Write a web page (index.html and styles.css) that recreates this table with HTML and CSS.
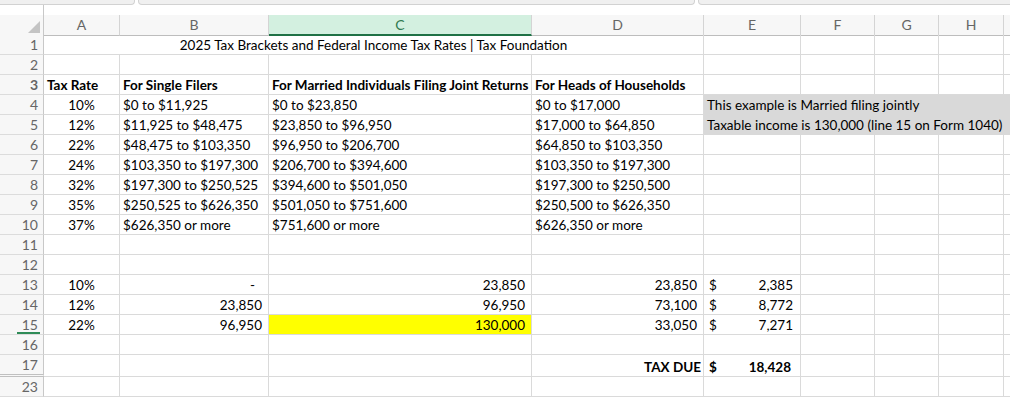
FILE: index.html
```html
<!DOCTYPE html>
<html>
<head>
<meta charset="utf-8">
<link rel="stylesheet" href="styles.css">
</head>
<body>
<div class="sheet">
  <div class="top">
    <div class="tab t1"></div>
    <div class="tab t2"></div>
    <div class="tab t3"></div>
  </div>
  <div class="gap"><div class="gap-corner"></div></div>

  <div class="row hdr">
    <div class="c corner"><span class="tri"></span></div>
    <div class="c">A</div><div class="c">B</div><div class="c sel">C</div><div class="c">D</div><div class="c">E</div><div class="c">F</div><div class="c">G</div><div class="c">H</div><div class="c"></div>
  </div>

  <div class="row">
    <div class="c rh">1</div>
    <div class="c title">2025 Tax Brackets and Federal Income Tax Rates | Tax Foundation</div>
    <div class="c"></div><div class="c"></div><div class="c"></div><div class="c"></div><div class="c"></div>
  </div>
  <div class="row">
    <div class="c rh">2</div>
    <div class="c"></div><div class="c"></div><div class="c"></div><div class="c"></div><div class="c"></div><div class="c"></div><div class="c"></div><div class="c"></div><div class="c"></div>
  </div>
  <div class="row bold">
    <div class="c rh">3</div>
    <div class="c">Tax Rate</div><div class="c">For Single Filers</div><div class="c">For Married Individuals Filing Joint Returns</div><div class="c">For Heads of Households</div><div class="c"></div><div class="c"></div><div class="c"></div><div class="c"></div><div class="c"></div>
  </div>
  <div class="row">
    <div class="c rh">4</div>
    <div class="c ctr">10%</div><div class="c">$0 to $11,925</div><div class="c">$0 to $23,850</div><div class="c">$0 to $17,000</div>
    <div class="c note">This example is Married filing jointly</div>
  </div>
  <div class="row">
    <div class="c rh">5</div>
    <div class="c ctr">12%</div><div class="c">$11,925 to $48,475</div><div class="c">$23,850 to $96,950</div><div class="c">$17,000 to $64,850</div>
    <div class="c note">Taxable income is 130,000 (line 15 on Form 1040)</div>
  </div>
  <div class="row">
    <div class="c rh">6</div>
    <div class="c ctr">22%</div><div class="c">$48,475 to $103,350</div><div class="c">$96,950 to $206,700</div><div class="c">$64,850 to $103,350</div><div class="c"></div><div class="c"></div><div class="c"></div><div class="c"></div><div class="c"></div>
  </div>
  <div class="row">
    <div class="c rh">7</div>
    <div class="c ctr">24%</div><div class="c">$103,350 to $197,300</div><div class="c">$206,700 to $394,600</div><div class="c">$103,350 to $197,300</div><div class="c"></div><div class="c"></div><div class="c"></div><div class="c"></div><div class="c"></div>
  </div>
  <div class="row">
    <div class="c rh">8</div>
    <div class="c ctr">32%</div><div class="c">$197,300 to $250,525</div><div class="c">$394,600 to $501,050</div><div class="c">$197,300 to $250,500</div><div class="c"></div><div class="c"></div><div class="c"></div><div class="c"></div><div class="c"></div>
  </div>
  <div class="row">
    <div class="c rh">9</div>
    <div class="c ctr">35%</div><div class="c">$250,525 to $626,350</div><div class="c">$501,050 to $751,600</div><div class="c">$250,500 to $626,350</div><div class="c"></div><div class="c"></div><div class="c"></div><div class="c"></div><div class="c"></div>
  </div>
  <div class="row">
    <div class="c rh">10</div>
    <div class="c ctr">37%</div><div class="c">$626,350 or more</div><div class="c">$751,600 or more</div><div class="c">$626,350 or more</div><div class="c"></div><div class="c"></div><div class="c"></div><div class="c"></div><div class="c"></div>
  </div>
  <div class="row">
    <div class="c rh">11</div>
    <div class="c"></div><div class="c"></div><div class="c"></div><div class="c"></div><div class="c"></div><div class="c"></div><div class="c"></div><div class="c"></div><div class="c"></div>
  </div>
  <div class="row">
    <div class="c rh">12</div>
    <div class="c"></div><div class="c"></div><div class="c"></div><div class="c"></div><div class="c"></div><div class="c"></div><div class="c"></div><div class="c"></div><div class="c"></div>
  </div>
  <div class="row">
    <div class="c rh">13</div>
    <div class="c ctr">10%</div><div class="c num dash">-</div><div class="c num">23,850</div><div class="c num">23,850</div>
    <div class="c acc"><span>$</span><span>2,385</span></div>
    <div class="c"></div><div class="c"></div><div class="c"></div><div class="c"></div>
  </div>
  <div class="row">
    <div class="c rh">14</div>
    <div class="c ctr">12%</div><div class="c num">23,850</div><div class="c num">96,950</div><div class="c num">73,100</div>
    <div class="c acc"><span>$</span><span>8,772</span></div>
    <div class="c"></div><div class="c"></div><div class="c"></div><div class="c"></div>
  </div>
  <div class="row">
    <div class="c rh"><span class="active">15</span></div>
    <div class="c ctr">22%</div><div class="c num">96,950</div><div class="c num hl">130,000</div><div class="c num">33,050</div>
    <div class="c acc"><span>$</span><span>7,271</span></div>
    <div class="c"></div><div class="c"></div><div class="c"></div><div class="c"></div>
  </div>
  <div class="row">
    <div class="c rh">16</div>
    <div class="c"></div><div class="c"></div><div class="c"></div><div class="c"></div><div class="c"></div><div class="c"></div><div class="c"></div><div class="c"></div><div class="c"></div>
  </div>
  <div class="row tall">
    <div class="c rh dbl">17</div>
    <div class="c"></div><div class="c"></div><div class="c"></div><div class="c num due">TAX DUE</div>
    <div class="c acc total"><span>$</span><span>18,428</span></div>
    <div class="c"></div><div class="c"></div><div class="c"></div><div class="c"></div>
  </div>
  <div class="row">
    <div class="c rh">23</div>
    <div class="c"></div><div class="c"></div><div class="c"></div><div class="c"></div><div class="c"></div><div class="c"></div><div class="c"></div><div class="c"></div><div class="c"></div>
  </div>
</div>
</body>
</html>
```

FILE: styles.css
```css
html, body {
  margin: 0;
  padding: 0;
  background: #ffffff;
}

.sheet {
  width: 1010px;
  height: 397px;
  overflow: hidden;
  font-family: Lato, "Liberation Sans", sans-serif;
  font-size: 13.5px;
  color: #000000;
}

.top {
  display: flex;
  gap: 3px;
  height: 5px;
  background: #ffffff;
}

.tab {
  height: 4px;
  background: #f0f0f0;
  border: 1px solid #d2d2d2;
  border-top: none;
  border-radius: 0 0 4px 4px;
}

.t1 { width: 137px; margin-left: -4px; }
.t2 { width: 555px; }
.t3 { flex: 1; margin-right: -4px; }

.gap {
  height: 10px;
}

.gap-corner {
  width: 44px;
  height: 10px;
  box-sizing: border-box;
  border-right: 1px solid #c8c8c8;
}

.row {
  display: grid;
  grid-template-columns: 44px 76px 149px 263px 172px 97px 74px 64px 65px 1fr;
  height: 20px;
}

.row.tall {
  height: 22px;
}

.c {
  box-sizing: border-box;
  border-right: 1px solid #dadada;
  border-bottom: 1px solid #dadada;
  padding: 1px 3px 0;
  line-height: 18px;
  white-space: nowrap;
  min-width: 0;
}

.row.tall .c {
  padding-top: 3px;
}

.row > .c:last-child {
  border-right: none;
}

.bold .c {
  font-weight: 700;
}

/* column headers */
.hdr .c {
  background: #f7f7f7;
  color: #666666;
  text-align: center;
  border-right-color: #d4d4d4;
  border-bottom-color: #bdbdbd;
  font-size: 14px;
}

.hdr .corner {
  border-right-color: #c8c8c8;
  display: flex;
  justify-content: flex-end;
  align-items: flex-end;
  padding: 0 3px 2px 0;
}

.tri {
  display: block;
  width: 12px;
  height: 12px;
  background: #c4c4c4;
  clip-path: polygon(100% 0, 100% 100%, 0 100%);
}

.hdr .sel {
  background: #d3f0e0;
  color: #2f7a4f;
  border-bottom: 2px solid #1e7145;
}

/* row headers */
.rh {
  background: #f7f7f7;
  color: #666666;
  text-align: right;
  padding-right: 5px;
  border-right-color: #c8c8c8;
  border-bottom-color: #dcdcdc;
  font-size: 14px;
}

.rh .active {
  display: inline-block;
  height: 18px;
  box-sizing: border-box;
  line-height: 17px;
  padding: 0 2px 0 5px;
  margin-right: -2px;
  border-bottom: 2px solid #2e8b57;
}

.row.tall .rh.dbl {
  border-bottom: 3px double #c0c0c0;
  padding-top: 1px;
}

/* cell types */
.title {
  grid-column: span 4;
  text-align: center;
}

.note {
  grid-column: span 5;
  background: #d9d9d9;
  border-right: none;
  border-bottom-color: #d9d9d9;
}

.ctr {
  text-align: center;
}

.num {
  text-align: right;
  padding-right: 6px;
}

.num.dash {
  padding-right: 13px;
}

.hl {
  background: #ffff00;
  border-right-color: #dadada;
}

.acc {
  display: flex;
  justify-content: space-between;
  padding: 1px 7px 0 5px;
}

.due {
  font-weight: 700;
  padding-right: 2px;
}

.total {
  font-weight: 700;
  padding-right: 9px;
}
```
